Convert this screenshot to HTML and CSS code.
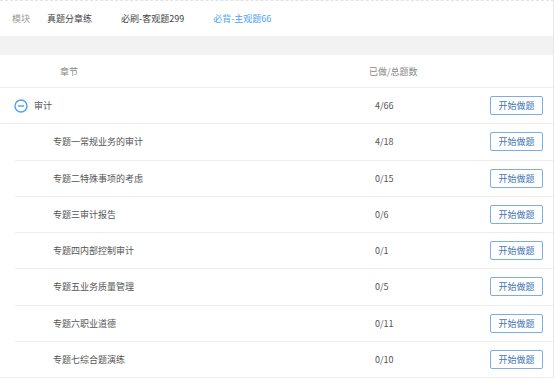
FILE: index.html
```html
<!DOCTYPE html>
<html lang="zh-CN">
<head>
    <meta charset="UTF-8">
    <title>章节练习</title>
    <link rel="stylesheet" href="styles.css">
</head>
<body>

<div class="page">
    <!-- Tabs -->
    <div class="tabs">
        <span class="tab-label">模块</span>
        <span class="tab">真题分章练</span>
        <span class="tab">必刷-客观题299</span>
        <span class="tab current">必背-主观题66</span>
    </div>

    <div class="band"></div>

    <!-- Table -->
    <div class="thead">
        <div class="col-name">章节</div>
        <div class="col-count">已做/总题数</div>
        <div></div>
    </div>

    <div class="row group">
        <div class="col-name">
            <svg class="fold" width="14" height="14" viewBox="0 0 14 14">
                <circle cx="7" cy="7" r="6" fill="none" stroke="#4ea1f3" stroke-width="1.4"/>
                <line x1="4" y1="7" x2="10" y2="7" stroke="#4ea1f3" stroke-width="1.4"/>
            </svg>
            审计
        </div>
        <div class="col-count">4/66</div>
        <div><button class="start">开始做题</button></div>
    </div>

    <div class="row sub">
        <div class="col-name">专题一常规业务的审计</div>
        <div class="col-count">4/18</div>
        <div><button class="start">开始做题</button></div>
    </div>
    <div class="row sub">
        <div class="col-name">专题二特殊事项的考虑</div>
        <div class="col-count">0/15</div>
        <div><button class="start">开始做题</button></div>
    </div>
    <div class="row sub">
        <div class="col-name">专题三审计报告</div>
        <div class="col-count">0/6</div>
        <div><button class="start">开始做题</button></div>
    </div>
    <div class="row sub">
        <div class="col-name">专题四内部控制审计</div>
        <div class="col-count">0/1</div>
        <div><button class="start">开始做题</button></div>
    </div>
    <div class="row sub">
        <div class="col-name">专题五业务质量管理</div>
        <div class="col-count">0/5</div>
        <div><button class="start">开始做题</button></div>
    </div>
    <div class="row sub">
        <div class="col-name">专题六职业道德</div>
        <div class="col-count">0/11</div>
        <div><button class="start">开始做题</button></div>
    </div>
    <div class="row sub last">
        <div class="col-name">专题七综合题演练</div>
        <div class="col-count">0/10</div>
        <div><button class="start">开始做题</button></div>
    </div>
</div>

</body>
</html>
```

FILE: styles.css
```css
body {
    margin: 0;
    background: #fff;
    font-family: "Noto Sans CJK SC", "Noto Sans", sans-serif;
    font-size: 9px;
    color: #555;
}

.page {
    width: 553px;
    border-right: 1px solid #e8e8e8;
    border-top: 1px dashed #e3e3e3;
}

/* Tabs */
.tabs {
    height: 35px;
    display: flex;
    align-items: center;
    padding-left: 12px;
}

.tab-label {
    color: #999;
    margin-right: 17px;
}

.tab {
    color: #444;
    margin-right: 29px;
}

.tab.current {
    color: #4ea1f3;
}

.band {
    height: 19px;
    background: #f2f2f2;
}

/* Table */
.thead,
.row {
    display: grid;
    grid-template-columns: 369px 121px 63px;
    align-items: center;
    border-bottom: 1px solid #eeeeee;
}

.thead {
    height: 32px;
    color: #888;
}

.thead .col-name {
    padding-left: 60px;
}

.row {
    height: 35.25px;
}

.row .col-count {
    padding-left: 6px;
}

.group .col-name {
    display: flex;
    align-items: center;
    padding-left: 14px;
}

.fold {
    margin-right: 6px;
}

.sub {
    margin-left: 15px;
    grid-template-columns: 354px 121px 63px;
}

.sub .col-name {
    padding-left: 38px;
}

.sub.last {
    margin-left: 0;
    padding-left: 15px;
}

.start {
    display: block;
    width: 53px;
    height: 19px;
    padding: 0;
    background: #fff;
    border: 1px solid #7eaee0;
    border-radius: 2px;
    color: #3f76b4;
    font-family: inherit;
    font-size: 9px;
    cursor: pointer;
}
```
